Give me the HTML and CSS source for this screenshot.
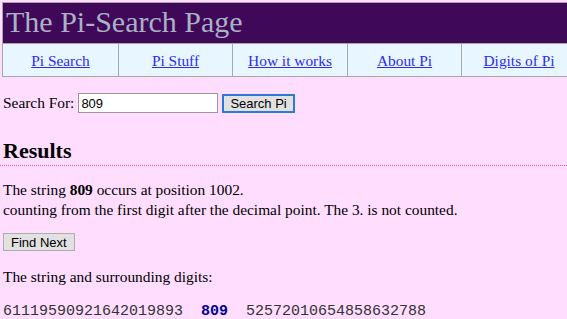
FILE: index.html
```html
<!DOCTYPE html>
<html>
<head>
<meta charset="utf-8">
<link rel="stylesheet" href="styles.css">
</head>
<body>
<div class="frame">
  <div class="title">The Pi-Search Page</div>
  <div class="nav">
    <div class="cell first"><a href="#">Pi Search</a></div>
    <div class="cell"><a href="#">Pi Stuff</a></div>
    <div class="cell wide"><a href="#">How it works</a></div>
    <div class="cell"><a href="#">About Pi</a></div>
    <div class="cell wide"><a href="#">Digits of Pi</a></div>
  </div>
</div>
<div class="content">
  <form class="search">
    <label>Search For:</label>
    <input class="field" type="text" value="809">
    <button class="btn primary" type="button">Search Pi</button>
  </form>
  <h2 class="results">Results</h2>
  <p class="para">The string <b>809</b> occurs at position 1002.<br>counting from the first digit after the decimal point. The 3. is not counted.</p>
  <button class="btn next" type="button">Find Next</button>
  <p class="para surround">The string and surrounding digits:</p>
  <div class="digits">61119590921642019893  <b>809</b>  52572010654858632788</div>
</div>
</body>
</html>
```
FILE: styles.css
```css
html, body {
  margin: 0;
  padding: 0;
  background: #ffddff;
  font-family: "Liberation Serif", "Times New Roman", serif;
  font-size: 15.4px;
  color: #000;
}
.frame {
  margin: 2px 0 0 2px;
  width: 580px;
  border-top: 1px solid #a8a8a8;
  border-left: 1px solid #a8a8a8;
}
.title {
  background: #400858;
  color: #a9b1c6;
  font-size: 30px;
  height: 40px;
  line-height: 38px;
  padding-left: 3px;
  border-bottom: 1px solid #a8a8a8;
}
.nav {
  display: flex;
  background: #e8f6ff;
  border-bottom: 1px solid #a8a8a8;
}
.cell {
  width: 114px;
  height: 32px;
  border-right: 1px solid #a8a8a8;
  display: flex;
  align-items: center;
  justify-content: center;
  padding-top: 2px;
  box-sizing: border-box;
  flex: none;
}
.cell.first {
  width: 116px;
}
.cell.wide {
  width: 115px;
}
.cell a {
  color: #2c2cf4;
}
.content {
  padding-left: 3px;
}
.search {
  margin: 16px 0 0 0;
  display: flex;
  align-items: center;
  height: 20px;
}
.field {
  margin: 0 0 0 4px;
  width: 140px;
  height: 20px;
  box-sizing: border-box;
  border: 1px solid #999;
  padding: 1px 2px;
  font-family: "Liberation Sans", Arial, sans-serif;
  font-size: 13px;
  background: #fff;
}
.btn {
  font-family: "Liberation Sans", Arial, sans-serif;
  font-size: 13px;
  background: #e1e1e1;
  border: 1px solid #adadad;
  padding: 0 7px;
  height: 18px;
  color: #000;
}
.primary {
  margin-left: 4px;
  border: 2px solid #2d7ad6;
  height: 19px;
  padding: 0 6px;
}
.results {
  margin: 25px 0 0 0;
  font-size: 22px;
  font-weight: bold;
  line-height: 26px;
  padding-bottom: 1px;
  border-bottom: 1px dotted #e0608a;
  margin-left: -3px;
  padding-left: 3px;
}
.para {
  margin: 14px 0 0 0;
  line-height: 20px;
}
.next {
  margin-top: 13px;
  display: block;
}
.surround {
  margin-top: 16px;
}
.digits {
  margin-top: 16px;
  font-family: "Liberation Mono", "Courier New", monospace;
  font-size: 15px;
  white-space: pre;
  color: #333;
}
.digits b {
  color: #000099;
}
```
